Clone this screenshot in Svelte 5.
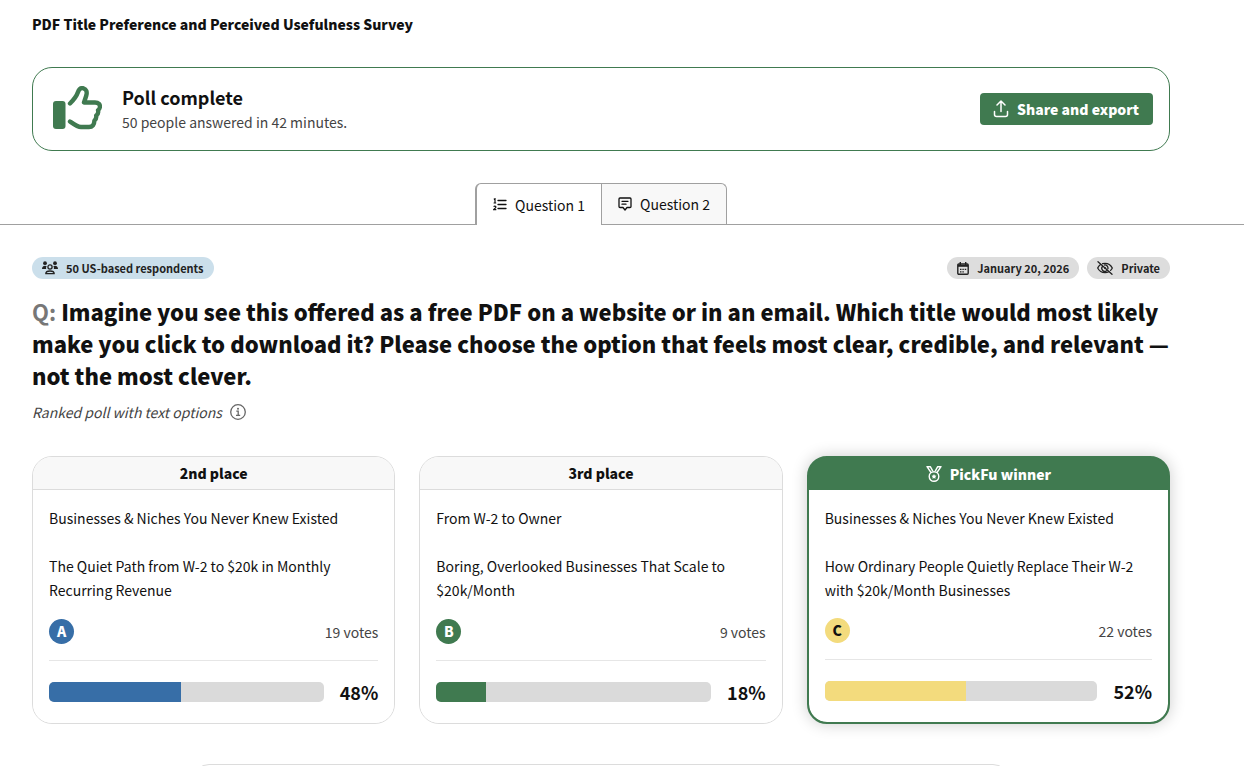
<script lang="ts">
  type Option = {
    letter: string;
    place: string;
    title: string;
    subtitle: string;
    votes: number;
    percent: number;
    color: string;
    textColor: string;
    winner?: boolean;
  };

  const options: Option[] = [
    {
      letter: "A",
      place: "2nd place",
      title: "Businesses & Niches You Never Knew Existed",
      subtitle: "The Quiet Path from W-2 to $20k in Monthly Recurring Revenue",
      votes: 19,
      percent: 48,
      color: "#376ea7",
      textColor: "#ffffff"
    },
    {
      letter: "B",
      place: "3rd place",
      title: "From W-2 to Owner",
      subtitle: "Boring, Overlooked Businesses That Scale to $20k/Month",
      votes: 9,
      percent: 18,
      color: "#407a50",
      textColor: "#ffffff"
    },
    {
      letter: "C",
      place: "PickFu winner",
      title: "Businesses & Niches You Never Knew Existed",
      subtitle: "How Ordinary People Quietly Replace Their W-2 with $20k/Month Businesses",
      votes: 22,
      percent: 52,
      color: "#f3db7d",
      textColor: "#111111",
      winner: true
    }
  ];

  let activeTab = $state(1);
</script>

<div class="page">
  <header class="wrap">
    <h1>PDF Title Preference and Perceived Usefulness Survey</h1>

    <section class="banner">
      <svg class="thumb" viewBox="0 0 49 46" fill="none" aria-hidden="true">
        <rect x="0" y="15" width="12.5" height="28" rx="3" fill="currentColor" />
        <path
          d="M17 17.5C21.5 13 23.5 10.5 25 6C26 3 28 1.7 30.5 2.3C33.3 3 34.3 6 33.3 9.5L31 16.500H42C45.5 16.5 47.5 18.5 46.8 21.5C46.6 22.8 45.8 23.6 45 24.2C45.6 26.5 45 28.2 43.2 29.5C43.6 31.8 43 33.3 41.4 34.6C41.4 38.5 39.5 41 36 41H28C24.5 41 20.5 38 17 35.5"
          stroke="currentColor" stroke-width="4.4" stroke-linecap="round" stroke-linejoin="round"
        />
      </svg>
      <div class="status">
        <h2>Poll complete</h2>
        <p>50 people answered in 42 minutes.</p>
      </div>
      <button class="share">
        <svg width="16" height="18" viewBox="0 0 16 18" fill="none" stroke="currentColor" stroke-width="1.5" stroke-linecap="round" stroke-linejoin="round" aria-hidden="true">
          <path d="M8 11.5V1.5M4 5l4-4 4 4M1.5 11.5v3a2 2 0 0 0 2 2h9a2 2 0 0 0 2-2v-3" />
        </svg>
        Share and export
      </button>
    </section>
  </header>

  <nav class="tabs">
    <button class="tab" class:active={activeTab === 1} onclick={() => (activeTab = 1)}>
      <svg width="14" height="14" viewBox="0 0 14 14" fill="none" stroke="currentColor" aria-hidden="true">
        <path stroke-width="1.3" d="M5 2.5h8M5 6.5h8M5 10.5h8" stroke-linecap="round" />
        <path stroke-width="1.2" d="M.8 1.4L2 .8V5M.6 5h2.6M.7 8.8c.6-1 2.2-.8 2.2.2 0 .8-1.500 1.700-2.200 2.600h2.600" />
      </svg>
      Question 1
    </button>
    <button class="tab" class:active={activeTab === 2} onclick={() => (activeTab = 2)}>
      <svg width="14" height="14" viewBox="0 0 14 14" fill="none" stroke="currentColor" stroke-width="1.3" stroke-linecap="round" stroke-linejoin="round" aria-hidden="true">
        <path d="M2 1h10a1 1 0 0 1 1 1v7.5a1 1 0 0 1-1 1H9L7 13l-2-2.5H2a1 1 0 0 1-1-1V2a1 1 0 0 1 1-1z" />
        <path d="M4 4.3h6M4 7.2h4" />
      </svg>
      Question 2
    </button>
  </nav>

  <main class="wrap">
    <div class="meta">
      <span class="pill blue">
        <svg width="16" height="14" viewBox="0 0 16 14" fill="currentColor" aria-hidden="true">
          <circle cx="3" cy="2.2" r="1.9" />
          <circle cx="13" cy="2.2" r="1.9" />
          <path d="M0 8c0-2 1-3.3 3-3.3.8 0 1.3.2 1.7.5C4 6 3.9 7 4.2 8zM16 8c0-2-1-3.3-3-3.3-.8 0-1.3.2-1.7.5.7.8.8 1.8.5 2.8z" />
          <circle cx="8" cy="6" r="2.1" fill="none" stroke="currentColor" stroke-width="1.3" />
          <path d="M3.8 12.7c0-2 1.6-2.7 4.2-2.7s4.2.7 4.2 2.7z" fill="none" stroke="currentColor" stroke-width="1.3" stroke-linejoin="round" />
        </svg>
        50 US-based respondents
      </span>
      <span class="pill date">
        <svg width="12" height="13" viewBox="0 0 12 13" fill="none" stroke="currentColor" stroke-width="1.4" aria-hidden="true">
          <rect x=".8" y="2" width="10.4" height="10.2" rx="1" />
          <path d="M3.3 0v3M8.7 0v3" />
          <path d="M1 3.800h10" stroke-width="2" />
          <path d="M3 7.3h1.5M5.4 7.3h1.4M7.7 7.3h1.5M3 9.8h1.5M5.4 9.8h1.4" stroke-width="1.2" />
        </svg>
        January 20, 2026
      </span>
      <span class="pill">
        <svg width="16" height="14" viewBox="0 0 16 14" fill="none" stroke="currentColor" stroke-width="1.3" stroke-linecap="round" aria-hidden="true">
          <path d="M3.5 3.5C2.3 4.4 1.3 5.6.7 7c1.5 3 4.2 4.7 7.3 4.7 1.4 0 2.7-.3 3.8-.9M5.6 2.6C6.4 2.4 7.2 2.3 8 2.3c3.1 0 5.8 1.7 7.3 4.7-.4.9-1 1.7-1.7 2.4" />
          <path d="M5.4 5.5a3 3 0 0 0 4.2 4.2M7.6 4a3 3 0 0 1 3.3 3.6M1 .8l14 12.4" />
          <circle cx="8" cy="7" r="1" fill="currentColor" stroke="none" />
        </svg>
        Private
      </span>
    </div>

    <h2 class="question">
      <span>Q:</span> Imagine you see this offered as a free PDF on a website or in an email. Which title would most likely make you click to download it? Please choose the option that feels most clear, credible, and relevant — not the most clever.
    </h2>

    <p class="kind">
      Ranked poll with text options
      <button class="info" aria-label="About ranked polls">
        <svg width="16" height="16" viewBox="0 0 16 16" fill="none" stroke="currentColor" stroke-width="1.3" aria-hidden="true">
          <circle cx="8" cy="8" r="7.3" />
          <path d="M6.3 7.2h1.9v4M6 11.3h4.2" />
          <circle cx="8" cy="4.7" r="1" fill="currentColor" stroke="none" />
        </svg>
      </button>
    </p>

    <div class="cards">
      {#each options as option (option.letter)}
        <article class="card" class:winner={option.winner}>
          <h3>
            {#if option.winner}
              <svg width="16" height="16" viewBox="0 0 16 16" fill="none" stroke="currentColor" stroke-width="1.4" stroke-linejoin="round" aria-hidden="true">
                <circle cx="8" cy="10.5" r="4.8" />
                <path d="M5 6.5L1 .7h3.3l2.5 4.5M11 6.5l4-5.8h-3.3L9.2 5.2" />
                <path d="M8 8l.8 1.600 1.700.2-1.200 1.200.3 1.700L8 11.900l-1.600.8.3-1.700-1.200-1.200 1.700-.2z" fill="currentColor" stroke="none" />
              </svg>
            {/if}
            {option.place}
          </h3>
          <div class="body">
            <p>{option.title}</p>
            <p>{option.subtitle}</p>
            <div class="votes">
              <span class="letter" style="background-color: {option.color}; color: {option.textColor}">{option.letter}</span>
              <span>{option.votes} votes</span>
            </div>
            <div class="result">
              <div class="bar">
                <div class="fill" style="width: {option.percent}%; background-color: {option.color}"></div>
              </div>
              <strong>{option.percent}%</strong>
            </div>
          </div>
        </article>
      {/each}
    </div>

    <section class="next"></section>
  </main>
</div>

<style>
  :global(body) {
    margin: 0;
    background: #ffffff;
  }

  .page {
    color: #111111;
    font-family: "Noto Sans CJK SC", "Noto Sans", sans-serif;
    font-size: 14px;
    line-height: 24px;
  }

  .wrap {
    padding: 0 74px 0 32px;
  }

  h1, h2, h3, p {
    margin: 0;
  }

  button {
    font: inherit;
    cursor: pointer;
  }

  svg {
    flex: none;
  }

  h1 {
    padding: 12px 0 31px;
    font-size: 14px;
    font-weight: 900;
    line-height: 24px;
  }

  .banner {
    display: flex;
    align-items: center;
    gap: 20px;
    box-sizing: border-box;
    min-height: 84px;
    padding: 0 16px 0 20px;
    border: 1px solid #407a50;
    border-radius: 20px;
  }

  .thumb {
    width: 49px;
    height: 46px;
    color: #407a50;
  }

  .status {
    flex: 1;
  }

  .status h2 {
    font-size: 18px;
    line-height: 26px;
  }

  .status p {
    color: #444444;
  }

  .share {
    display: flex;
    align-items: center;
    gap: 8px;
    height: 32px;
    padding: 0 14px 0 13px;
    border: none;
    border-radius: 4px;
    background: #407a50;
    color: #ffffff;
    font-weight: 900;
  }

  .tabs {
    display: flex;
    justify-content: center;
    margin-top: 32px;
    padding: 0 74px 0 32px;
    border-bottom: 1px solid #a0a0a0;
  }

  .tab {
    display: flex;
    align-items: center;
    gap: 8px;
    box-sizing: border-box;
    height: 41px;
    padding: 0 16px;
    border: 1px solid #a0a0a0;
    border-bottom: none;
    border-left: none;
    border-radius: 0 6px 0 0;
    background: #f8f8f8;
    color: #111111;
  }

  .tab:first-child {
    border-left: 2px solid #a0a0a0;
    border-radius: 6px 0 0 0;
  }

  .tab.active {
    height: 42px;
    margin-bottom: -1px;
    background: #ffffff;
  }

  .meta {
    display: flex;
    align-items: center;
    gap: 8px;
    margin-top: 32px;
  }

  .pill {
    display: flex;
    align-items: center;
    gap: 8px;
    height: 22px;
    padding: 0 10px;
    border-radius: 11px;
    background: #dddddd;
    color: #222222;
    font-size: 11px;
    font-weight: 600;
  }

  .pill.blue {
    background: #cbdfeb;
  }

  .pill.date {
    margin-left: auto;
  }

  .question {
    margin-top: 16px;
    font-size: 22px;
    font-weight: 900;
    line-height: 32px;
  }

  .question span {
    color: #777777;
    font-weight: 700;
  }

  .kind {
    display: flex;
    align-items: center;
    gap: 8px;
    margin-top: 9px;
    color: #444444;
    font-style: italic;
  }

  .info {
    display: flex;
    padding: 0;
    border: none;
    background: none;
    color: #666666;
  }

  .cards {
    display: grid;
    grid-template-columns: repeat(3, 1fr);
    gap: 24px;
    margin-top: 32px;
  }

  .card {
    display: flex;
    flex-direction: column;
    border: 1px solid #dcdcdc;
    border-radius: 20px;
    overflow: hidden;
  }

  .card h3 {
    display: flex;
    align-items: center;
    justify-content: center;
    gap: 8px;
    height: 32px;
    border-bottom: 1px solid #dcdcdc;
    background: #f8f8f8;
    font-size: 14px;
    font-weight: 900;
  }

  .card.winner {
    border: 2px solid #407a50;
    background: #407a50;
    box-shadow: 0 0 16px rgba(0, 0, 0, 0.2);
  }

  .card.winner h3 {
    border-bottom: none;
    background: #407a50;
    color: #ffffff;
  }

  .body {
    display: flex;
    flex: 1;
    flex-direction: column;
    padding: 16px;
    border-radius: 0 0 18px 18px;
    background: #ffffff;
  }

  .body p + p {
    margin-top: 24px;
  }

  .votes {
    display: flex;
    align-items: center;
    justify-content: space-between;
    margin-top: auto;
    padding: 16px 0;
    border-bottom: 1px solid #e6e6e6;
    color: #444444;
  }

  .letter {
    width: 25px;
    height: 25px;
    border-radius: 50%;
    font-weight: 900;
    line-height: 25px;
    text-align: center;
  }

  .result {
    display: flex;
    align-items: center;
    gap: 16px;
    padding-top: 16px;
  }

  .result strong {
    font-size: 18px;
    line-height: 30px;
  }

  .bar {
    flex: 1;
    height: 20px;
    border-radius: 5px;
    background: #dadada;
    overflow: hidden;
  }

  .fill {
    height: 100%;
  }

  .next {
    box-sizing: border-box;
    max-width: 816px;
    height: 80px;
    margin: 40px auto 0;
    border: 1px solid #dcdcdc;
    border-radius: 16px;
  }
</style>
